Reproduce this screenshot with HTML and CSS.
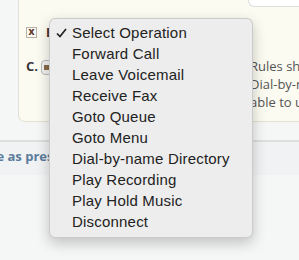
FILE: index.html
```html
<!DOCTYPE html>
<html lang="en">
<head>
  <meta charset="UTF-8">
  <meta name="viewport" content="width=device-width, initial-scale=1.0">
  <title>Operation Menu</title>
  <link rel="stylesheet" href="styles.css">
</head>
<body>

  <div class="panel">
    <div class="panel-top">
      <div class="field"></div>
    </div>
    <div class="row-b">
      <span class="checkbox">x</span>
      <span class="label">E</span>
    </div>
    <div class="row-c">
      <div class="step">
        <span class="label">C.</span>
        <span class="select"><span class="select-knob"></span></span>
      </div>
      <div class="note">
        <div>Rules should</div>
        <div>Dial-by-name</div>
        <div>able to use</div>
      </div>
    </div>
  </div>

  <div class="footer">
    <a class="footer-link">Save as preset</a>
  </div>

  <!-- Open dropdown for the operation select -->
  <ul class="menu">
    <li class="menu-item">
      <span class="mark">
        <svg width="11" height="10" viewBox="0 0 11 10"><polyline points="1,5.5 4,8.5 10,1" fill="none" stroke="#222" stroke-width="1.7"/></svg>
      </span>Select Operation
    </li>
    <li class="menu-item"><span class="mark"></span>Forward Call</li>
    <li class="menu-item"><span class="mark"></span>Leave Voicemail</li>
    <li class="menu-item"><span class="mark"></span>Receive Fax</li>
    <li class="menu-item"><span class="mark"></span>Goto Queue</li>
    <li class="menu-item"><span class="mark"></span>Goto Menu</li>
    <li class="menu-item"><span class="mark"></span>Dial-by-name Directory</li>
    <li class="menu-item"><span class="mark"></span>Play Recording</li>
    <li class="menu-item"><span class="mark"></span>Play Hold Music</li>
    <li class="menu-item"><span class="mark"></span>Disconnect</li>
  </ul>

</body>
</html>
```

FILE: styles.css
```css
body {
  margin: 0;
  font-family: 'Open Sans', sans-serif;
  background-color: #f5f6f6;
  overflow: hidden;
}
.panel {
  margin-left: 18px;
  height: 121px;
  padding-left: 7px;
  background-color: #fcfbf2;
  border-left: 1px solid #e3e1d5;
  border-bottom: 1px solid #e3e1d5;
  border-bottom-left-radius: 7px;
}
.panel-top {
  display: flex;
  justify-content: flex-end;
  height: 7px;
}
.field {
  width: 50px;
  height: 6px;
  background: white;
  border-left: 1px solid #dedede;
  border-bottom: 1px solid #dedede;
  border-bottom-left-radius: 6px;
}
.row-b {
  display: flex;
  align-items: center;
  margin-top: 20px;
  height: 11px;
}
.checkbox {
  width: 9px;
  height: 9px;
  border: 1px solid #b8b2a6;
  background: #fbfaf6;
  color: #5e3526;
  font: bold 10px 'DejaVu Sans', sans-serif;
  line-height: 8px;
  text-align: center;
}
.label {
  font-size: 12px;
  font-weight: bold;
  color: #3d3438;
}
.row-b .label {
  margin-left: 9px;
}
.row-c {
  display: flex;
  justify-content: space-between;
  margin-top: 19px;
}
.step {
  display: flex;
  align-items: flex-start;
}
.step .label {
  font-size: 13px;
  line-height: 16px;
  margin-top: 1px;
}
.select {
  display: flex;
  align-items: center;
  width: 11px;
  height: 13px;
  margin: 3px 0 0 3px;
  border: 1px solid #b9b9b9;
  border-radius: 4px;
  background: #f1f1f1;
}
.select-knob {
  width: 6px;
  height: 5px;
  margin-left: 2px;
  background: #8a6a4a;
}
.note {
  width: 49px;
  white-space: nowrap;
  font-size: 13px;
  line-height: 18px;
  color: #555;
}
.footer {
  margin-top: 18px;
  height: 28px;
  padding-top: 5px;
  background-color: #f0f2f3;
  border-top: 2px solid #dcdede;
}
.footer-link {
  display: block;
  margin-left: -26px;
  font-size: 13px;
  font-weight: bold;
  line-height: 18px;
  color: #5b7c9c;
  white-space: nowrap;
}
/* Dropdown laid over the form */
.menu {
  position: absolute;
  top: 18px;
  left: 49px;
  width: 202px;
  margin: 0;
  padding: 3px 0 5px;
  list-style: none;
  background-color: #ededed;
  border: 1px solid rgba(0, 0, 0, 0.14);
  border-radius: 6px;
  box-shadow: 0 5px 14px rgba(0, 0, 0, 0.22);
}
.menu-item {
  display: flex;
  align-items: center;
  height: 21px;
  font-family: 'Liberation Sans', Arial, sans-serif;
  font-size: 15px;
  letter-spacing: 0.2px;
  color: #222;
  white-space: nowrap;
}
.mark {
  display: flex;
  align-items: center;
  width: 16px;
  margin-left: 6px;
}
```
